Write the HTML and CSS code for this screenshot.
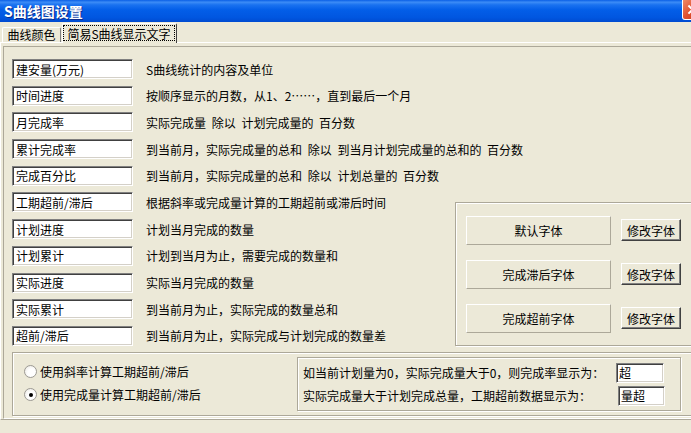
FILE: index.html
```html
<!DOCTYPE html>
<html lang="zh-CN">
<head>
  <meta charset="UTF-8" />
  <title>S曲线图设置</title>
  <link rel="stylesheet" href="styles.css">
</head>
<body>
  <div class="window">
    <div class="titlebar">
      <span class="title">S曲线图设置</span>
      <span class="close">
        <svg viewBox="0 0 21 20" width="21" height="20">
          <path d="M6 5 L15 14 M15 5 L6 14" stroke="#fff" stroke-width="2.2" />
        </svg>
      </span>
    </div>

    <div class="tabs">
      <div class="tab">曲线颜色</div>
      <div class="tab active"><span class="focus">简易S曲线显示文字</span></div>
    </div>

    <div class="panel">
      <div class="frame">
        <div class="fields">
          <div class="field wide"><input class="edit" value="建安量(万元)" readonly><span class="desc">S曲线统计的内容及单位</span></div>
          <div class="field wide"><input class="edit" value="时间进度" readonly><span class="desc">按顺序显示的月数，从1、2……，直到最后一个月</span></div>
          <div class="field wide"><input class="edit" value="月完成率" readonly><span class="desc">实际完成量 除以 计划完成量的 百分数</span></div>
          <div class="field wide"><input class="edit" value="累计完成率" readonly><span class="desc">到当前月，实际完成量的总和 除以 到当月计划完成量的总和的 百分数</span></div>
          <div class="field wide"><input class="edit" value="完成百分比" readonly><span class="desc">到当前月，实际完成量的总和 除以 计划总量的 百分数</span></div>
          <div class="field"><input class="edit" value="工期超前/滞后" readonly><span class="desc">根据斜率或完成量计算的工期超前或滞后时间</span></div>
          <div class="field"><input class="edit" value="计划进度" readonly><span class="desc">计划当月完成的数量</span></div>
          <div class="field"><input class="edit" value="计划累计" readonly><span class="desc">计划到当月为止，需要完成的数量和</span></div>
          <div class="field"><input class="edit" value="实际进度" readonly><span class="desc">实际当月完成的数量</span></div>
          <div class="field"><input class="edit" value="实际累计" readonly><span class="desc">到当前月为止，实际完成的数量总和</span></div>
          <div class="field"><input class="edit" value="超前/滞后" readonly><span class="desc">到当前月为止，实际完成与计划完成的数量差</span></div>

          <div class="group fonts">
            <div class="font-row"><button class="btn-flat">默认字体</button><button class="btn">修改字体</button></div>
            <div class="font-row"><button class="btn-flat">完成滞后字体</button><button class="btn">修改字体</button></div>
            <div class="font-row"><button class="btn-flat">完成超前字体</button><button class="btn">修改字体</button></div>
          </div>
        </div>

        <div class="group opts">
          <div class="radios">
            <label class="radio"><span class="dot"></span>使用斜率计算工期超前/滞后</label>
            <label class="radio"><span class="dot checked"></span>使用完成量计算工期超前/滞后</label>
          </div>
          <div class="group limit">
            <div class="limit-row"><span class="limit-text">如当前计划量为0，实际完成量大于0，则完成率显示为：</span><input class="edit small" value="超" readonly></div>
            <div class="limit-row"><span class="limit-text">实际完成量大于计划完成总量，工期超前数据显示为：</span><input class="edit small shift" value="量超" readonly></div>
          </div>
        </div>
      </div>
    </div>
  </div>
</body>
</html>
```

FILE: styles.css
```css
body {
  margin: 0;
  background-color: #ece9d8;
  font-family: "Noto Sans CJK SC", "Noto Sans", sans-serif;
  font-size: 12px;
  color: #000;
  overflow: hidden;
}

.window {
  width: 706px;
}

/* title bar */
.titlebar {
  height: 22px;
  box-sizing: border-box;
  padding: 0 3px 0 4px;
  display: flex;
  align-items: center;
  justify-content: space-between;
  background: linear-gradient(to bottom, #0a5fe6 0%, #3c8cf6 10%, #1a72f0 22%, #035ee8 45%, #0056e0 80%, #004bd0 100%);
}

.title {
  color: #fff;
  font-weight: bold;
  font-size: 14px;
  text-shadow: 1px 1px 0 #0b2a8a;
}

.close {
  align-self: flex-start;
  width: 21px;
  height: 20px;
  box-sizing: border-box;
  border: 1px solid #fff;
  border-top: none;
  border-radius: 0 0 3px 3px;
  background: linear-gradient(135deg, #f08a66 0%, #e0502e 50%, #c83a1c 100%);
  display: flex;
}

/* tabs */
.tabs {
  height: 20px;
  padding-left: 2px;
  display: flex;
  align-items: flex-end;
}

.tab {
  width: 59px;
  height: 15px;
  box-sizing: border-box;
  border: 1px solid #fff;
  border-right-color: #808080;
  border-bottom: none;
  border-radius: 2px 2px 0 0;
  text-align: center;
  line-height: 13px;
}

.tab.active {
  width: 115px;
  height: 20px;
  margin-left: 1px;
  margin-bottom: -1px;
  padding-top: 1px;
  position: relative;
  z-index: 1;
  background-color: #ece9d8;
  border-right: 1px solid #404040;
}

.focus {
  display: flex;
  align-items: center;
  justify-content: center;
  width: 112px;
  height: 16px;
  box-sizing: border-box;
  border: 1px dotted #000;
}

/* page */
.panel {
  border-top: 1px solid #fff;
  border-left: 1px solid #fff;
  border-bottom: 1px solid #aca899;
  padding: 3px 0 0 2px;
}

.frame {
  border-top: 1px solid #aca899;
  border-left: 1px solid #aca899;
  border-bottom: 1px solid #fff;
  padding: 12px 0 2px 8px;
}

.fields {
  display: grid;
  grid-template-columns: 443px 1fr;
  grid-auto-rows: 20px;
  row-gap: 6.7px;
}

.field {
  grid-column: 1;
  display: flex;
  align-items: center;
}

.field.wide {
  grid-column: 1 / -1;
}

.edit {
  width: 121px;
  height: 20px;
  box-sizing: border-box;
  margin: 0;
  padding: 0 0 0 3px;
  border: 1px solid;
  border-color: #808080 #fff #fff #808080;
  box-shadow: inset 1px 1px 0 #404040, inset -1px -1px 0 #d4d0c8;
  background-color: #fff;
  font-family: "Noto Sans CJK SC", "Noto Sans", sans-serif;
  font-size: 12px;
  color: #000;
  outline: none;
}

.desc {
  margin-left: 13px;
  white-space: nowrap;
  word-spacing: 3px;
}

.group {
  border: 1px solid #aca899;
  box-shadow: inset 1px 1px 0 #fff, 1px 1px 0 #fff;
}

/* font buttons */
.fonts {
  grid-column: 2;
  grid-row: 6 / 12;
  margin-top: 9.5px;
  padding: 13px 0 0 10px;
  display: flex;
  flex-direction: column;
  gap: 15px;
}

.font-row {
  display: flex;
  align-items: center;
  gap: 10px;
}

button {
  margin: 0;
  padding: 0;
  background-color: #ece9d8;
  font-family: "Noto Sans CJK SC", "Noto Sans", sans-serif;
  font-size: 12px;
  color: #000;
}

.btn-flat {
  width: 145px;
  height: 29px;
  border: 1px solid;
  border-color: #fff #aca899 #aca899 #fff;
}

.btn {
  width: 60px;
  height: 22px;
  border: 1px solid;
  border-color: #fff #404040 #404040 #fff;
  box-shadow: inset -1px -1px 0 #808080;
}

/* bottom options */
.opts {
  margin-top: 6px;
  height: 64px;
  box-sizing: border-box;
  display: flex;
  align-items: flex-start;
}

.radios {
  width: 284px;
  box-sizing: border-box;
  padding: 9px 0 0 11px;
  display: flex;
  flex-direction: column;
  gap: 3px;
}

.radio {
  height: 20px;
  display: flex;
  align-items: center;
  gap: 3px;
}

.dot {
  width: 13px;
  height: 13px;
  box-sizing: border-box;
  border-radius: 50%;
  border: 1px solid #9c9a94;
  background: radial-gradient(circle at 60% 60%, #fff 40%, #e6e4dc 100%);
  display: flex;
  align-items: center;
  justify-content: center;
}

.dot.checked::after {
  content: "";
  width: 4px;
  height: 4px;
  border-radius: 50%;
  background-color: #000;
}

.limit {
  margin-top: 4px;
  width: 384px;
  height: 54px;
  box-sizing: border-box;
  padding: 5px 0 0 5px;
  display: flex;
  flex-direction: column;
  gap: 3px;
}

.limit-row {
  height: 20px;
  display: flex;
  align-items: center;
}

.limit-text {
  width: 313px;
  white-space: nowrap;
}

.edit.small {
  width: 48px;
  padding-left: 2px;
}

.edit.shift {
  margin-left: 2px;
  width: 47px;
}
```
